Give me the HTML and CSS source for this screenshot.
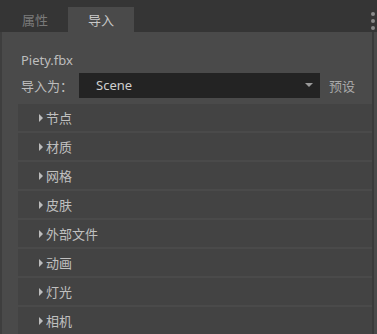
FILE: index.html
```html
<!DOCTYPE html>
<html>
<head>
<meta charset="utf-8">
<link rel="stylesheet" href="styles.css">
</head>
<body>
<div class="app">
  <div class="tabbar">
    <div class="tab">属性</div>
    <div class="tab active">导入</div>
    <div class="spacer"></div>
    <div class="more"><span></span><span></span><span></span></div>
  </div>
  <div class="main">
    <div class="panel">
      <div class="file">Piety.fbx</div>
      <div class="importrow">
        <div class="label">导入为：</div>
        <div class="select"><span>Scene</span><i class="caret"></i></div>
        <div class="preset">预设</div>
      </div>
      <div class="sections">
        <div class="sec"><i class="tri"></i>节点</div>
        <div class="sec"><i class="tri"></i>材质</div>
        <div class="sec"><i class="tri"></i>网格</div>
        <div class="sec"><i class="tri"></i>皮肤</div>
        <div class="sec"><i class="tri"></i>外部文件</div>
        <div class="sec"><i class="tri"></i>动画</div>
        <div class="sec"><i class="tri"></i>灯光</div>
        <div class="sec"><i class="tri"></i>相机</div>
      </div>
    </div>
    <div class="scroll"></div>
  </div>
</div>
</body>
</html>
```
FILE: styles.css
```css
* { box-sizing: border-box; }
html, body { margin: 0; padding: 0; }
body {
  width: 377px;
  height: 334px;
  overflow: hidden;
  background: #4a4a4a;
  font-family: "Noto Sans", "Noto Sans CJK SC", sans-serif;
  font-size: 13px;
  color: #c4c4c4;
}
.app { display: flex; flex-direction: column; height: 334px; }
.tabbar {
  height: 33px;
  background: #353535;
  display: flex;
  align-items: flex-end;
}
.tab {
  width: 66px;
  height: 25px;
  display: flex;
  align-items: center;
  justify-content: center;
  color: #7a7a7a;
  font-size: 13px;
  margin-left: 2px;
}
.tab.active {
  background: #4a4a4a;
  color: #c8c8c8;
  margin-left: 0;
}
.spacer { flex: 1; }
.more {
  align-self: flex-start;
  display: flex;
  flex-direction: column;
  gap: 3px;
  padding: 12px 2px 0 0;
}
.more span {
  width: 4px;
  height: 4px;
  border-radius: 50%;
  background: #8a8a8a;
}
.main { flex: 1; display: flex; }
.panel {
  flex: 1;
  background: #4a4a4a;
  border-left: 2px solid #3e3e3e;
  padding: 18px 0 0 16px;
}
.scroll { width: 2px; background: #3a3a3a; margin-right: 3px; }
.file { height: 20px; line-height: 20px; padding-left: 3px; color: #bdbdbd; }
.importrow {
  display: flex;
  align-items: center;
  height: 26px;
  margin-top: 2px;
}
.label { width: 61px; padding-left: 3px; color: #bdbdbd; }
.select {
  width: 241px;
  height: 25px;
  background: #232323;
  display: flex;
  align-items: center;
  padding-left: 17px;
  padding-right: 7px;
  color: #cfcfcf;
}
.select span { flex: 1; }
.caret {
  width: 0; height: 0;
  border-left: 4px solid transparent;
  border-right: 4px solid transparent;
  border-top: 4px solid #9a9a9a;
}
.preset { margin-left: 9px; color: #a8a8a8; }
.sections {
  margin-top: 6px;
  display: flex;
  flex-direction: column;
  gap: 2px;
}
.sec {
  height: 27px;
  background: #434343;
  display: flex;
  align-items: center;
  padding-left: 21px;
  color: #c0c0c0;
}
.tri {
  width: 0; height: 0;
  border-top: 4px solid transparent;
  border-bottom: 4px solid transparent;
  border-left: 4px solid #bdbdbd;
  margin-right: 3px;
}
```
